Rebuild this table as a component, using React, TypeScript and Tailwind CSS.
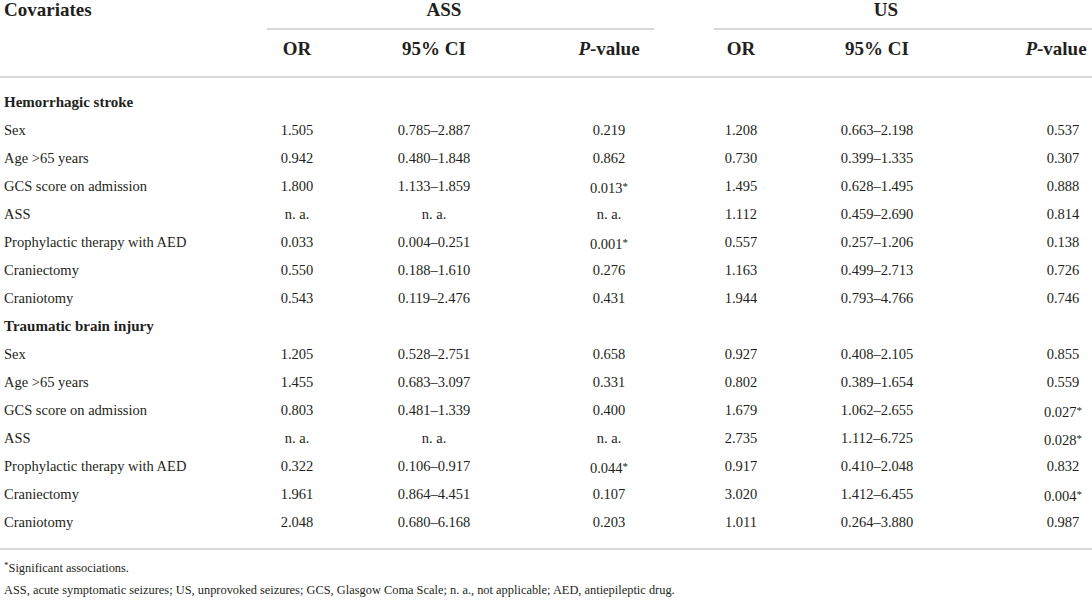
import React from "react";

type Row = { label: string; v: string[] } | { section: string };

const rows: Row[] = [
  { section: "Hemorrhagic stroke" },
  { label: "Sex", v: ["1.505", "0.785–2.887", "0.219", "1.208", "0.663–2.198", "0.537"] },
  { label: "Age >65 years", v: ["0.942", "0.480–1.848", "0.862", "0.730", "0.399–1.335", "0.307"] },
  { label: "GCS score on admission", v: ["1.800", "1.133–1.859", "0.013*", "1.495", "0.628–1.495", "0.888"] },
  { label: "ASS", v: ["n. a.", "n. a.", "n. a.", "1.112", "0.459–2.690", "0.814"] },
  { label: "Prophylactic therapy with AED", v: ["0.033", "0.004–0.251", "0.001*", "0.557", "0.257–1.206", "0.138"] },
  { label: "Craniectomy", v: ["0.550", "0.188–1.610", "0.276", "1.163", "0.499–2.713", "0.726"] },
  { label: "Craniotomy", v: ["0.543", "0.119–2.476", "0.431", "1.944", "0.793–4.766", "0.746"] },
  { section: "Traumatic brain injury" },
  { label: "Sex", v: ["1.205", "0.528–2.751", "0.658", "0.927", "0.408–2.105", "0.855"] },
  { label: "Age >65 years", v: ["1.455", "0.683–3.097", "0.331", "0.802", "0.389–1.654", "0.559"] },
  { label: "GCS score on admission", v: ["0.803", "0.481–1.339", "0.400", "1.679", "1.062–2.655", "0.027*"] },
  { label: "ASS", v: ["n. a.", "n. a.", "n. a.", "2.735", "1.112–6.725", "0.028*"] },
  { label: "Prophylactic therapy with AED", v: ["0.322", "0.106–0.917", "0.044*", "0.917", "0.410–2.048", "0.832"] },
  { label: "Craniectomy", v: ["1.961", "0.864–4.451", "0.107", "3.020", "1.412–6.455", "0.004*"] },
  { label: "Craniotomy", v: ["2.048", "0.680–6.168", "0.203", "1.011", "0.264–3.880", "0.987"] },
];

const cols = "grid grid-cols-[262px_70px_204px_146px_118px_154px_218px]";

function Val({ s }: { s: string }) {
  const star = s.endsWith("*");
  const t = star ? s.slice(0, -1) : s;
  return (
    <span>
      {t}
      {star && <span className="text-[11px] align-[3px]">*</span>}
    </span>
  );
}

export default function App() {
  return (
    <div className="w-[1092px] h-[608px] overflow-hidden bg-white text-[#231f20] font-['Liberation_Serif',serif]">
      <div className="w-[1172px]">
        {/* header row 1 */}
        <div className={`${cols} h-[28px] font-bold text-[19px] leading-[19px]`}>
          <div className="pl-[4px]">Covariates</div>
          <div className="col-span-3 text-center pr-[56px]">ASS</div>
          <div className="col-span-3 text-center pr-[82px]">US</div>
        </div>
        <div className={`${cols} h-[2px]`}>
          <div />
          <div className="col-span-3 ml-[5px] mr-[28px] bg-[#d9d9d9]" />
          <div className="col-span-3 ml-[32px] bg-[#d9d9d9]" />
        </div>
        {/* header row 2 */}
        <div className={`${cols} h-[46px] pt-[9px] font-bold text-[19px] leading-[19px]`}>
          <div />
          <div className="text-center">OR</div>
          <div className="text-center">95% CI</div>
          <div className="text-center">
            <span className="italic">P</span>-value
          </div>
          <div className="text-center">OR</div>
          <div className="text-center">95% CI</div>
          <div className="text-center pr-[14px]">
            <span className="italic">P</span>-value
          </div>
        </div>
        <div className="h-[2px] bg-[#d9d9d9]" />
        <div className="pt-[10px]">
          {rows.map((r, i) =>
            "section" in r ? (
              <div key={i} className="h-[28px] leading-[28px] pl-[4px] font-bold text-[15px]">
                {r.section}
              </div>
            ) : (
              <div key={i} className={`${cols} h-[28px] leading-[28px] text-[14.5px]`}>
                <div className="pl-[4px]">{r.label}</div>
                {r.v.map((s, j) => (
                  <div key={j} className="text-center">
                    <Val s={s} />
                  </div>
                ))}
              </div>
            )
          )}
        </div>
        <div className="mt-[12px] h-[2px] bg-[#d9d9d9]" />
        <div className="pl-[4px] pt-[4px] text-[12.4px] leading-[22px]">
          <div>
            <span className="text-[9px] align-[4px]">*</span>Significant associations.
          </div>
          <div>
            ASS, acute symptomatic seizures; US, unprovoked seizures; GCS, Glasgow Coma Scale; n. a., not applicable; AED, antiepileptic drug.
          </div>
        </div>
      </div>
    </div>
  );
}
